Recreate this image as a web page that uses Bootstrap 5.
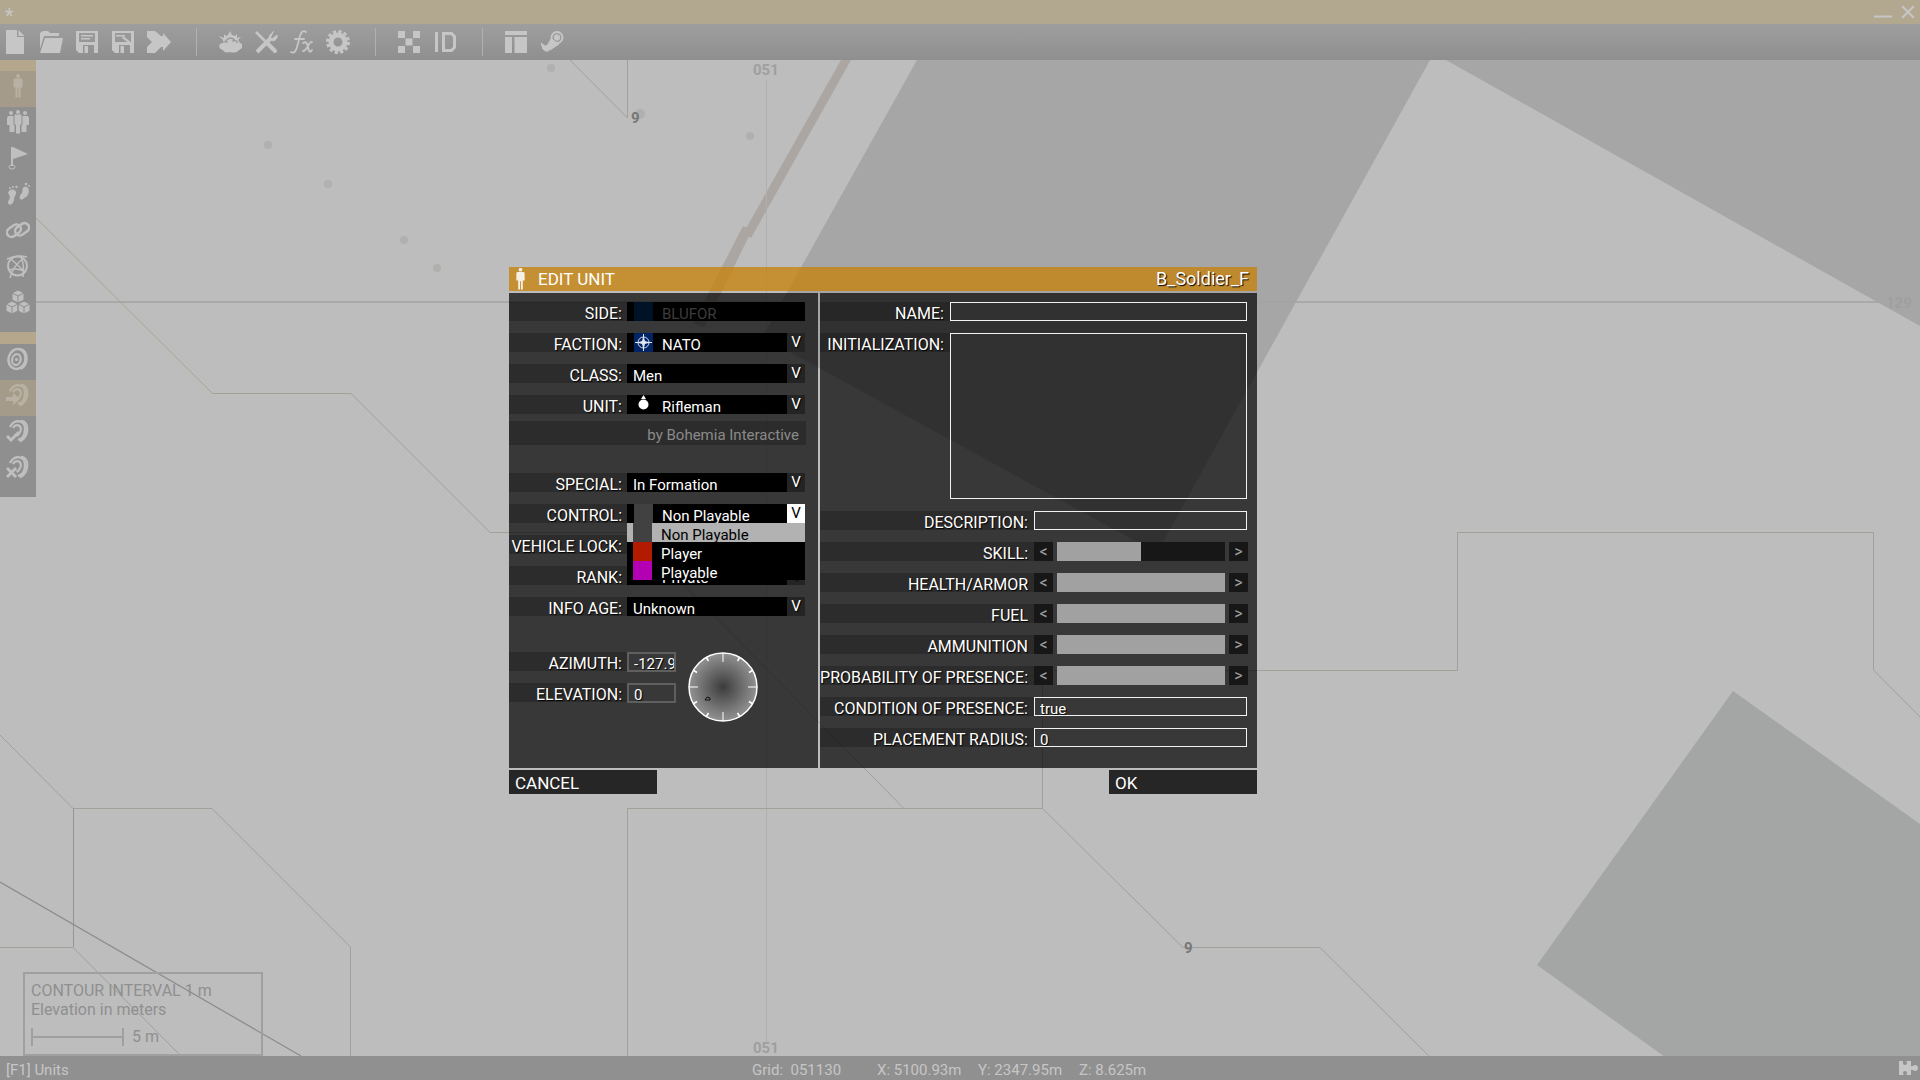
<!DOCTYPE html>
<html lang="en">
<head>
<meta charset="utf-8">
<meta name="viewport" content="width=device-width, initial-scale=1">
<title>Scenario editor - Edit Unit</title>
<link href="https://cdn.jsdelivr.net/npm/bootstrap@5.3.0/dist/css/bootstrap.min.css" rel="stylesheet">
<style>
  :root { --ink:#c6c6c6; }
  body { font-family:Roboto,"Liberation Sans",sans-serif; font-size:15px; line-height:18px; background:#bdbdbd; color:#fff; }
  button, input, select, textarea { font:inherit; color:inherit; border:0; border-radius:0; background:none; padding:0; margin:0; }
  .win-bar { height:24px; background:#b2a78f; color:var(--ink); padding:0 5px; }
  .win-mark { font-size:20px; line-height:32px; height:24px; }
  .tool-bar { height:36px; background:linear-gradient(#9e9e9e,#8f8f8f); padding-left:3px; gap:12px; color:var(--ink); }
  .tool-bar button { width:24px; height:24px; line-height:0; }
  .tool-sep { width:1px; height:28px; background:#b0b0b0; margin:0 9px 0 13px; }
  .map-area { overflow:hidden; }
  .map-svg { position:absolute; left:0; top:-60px; width:1920px; height:1080px; }
  .side-bar { position:absolute; left:0; top:-1px; width:36px; background:#8f8f8f; color:#bfbfbf; }
  .side-bar .side-head { height:12px; background:#b5a78c; }
  .side-bar .side-gap { height:9px; }
  .side-bar button { height:36px; padding:0 0 6px; line-height:0; }
  .side-bar .picked { background:#a59b8a; color:#b9b1a3; }
  .legend-box { position:absolute; left:23px; bottom:0; width:240px; height:84px; border:2px solid #a0a0a0; color:#8f8f8f; padding:7px 6px; font-size:16px; line-height:19px; }
  .scale-line { width:93px; height:18px; border:solid #a0a0a0; border-width:0 2px; background:linear-gradient(#a0a0a0,#a0a0a0) center/100% 2px no-repeat; }
  .status-bar { height:24px; background:#909090; color:var(--ink); padding:0 0 0 6px; font-size:15px; line-height:28px; }
  .status-read { position:absolute; left:752px; white-space:pre; }
  .status-read .grid-ref { width:125px; }
  .status-read .coord { width:101px; }

  .dlg { position:absolute; left:509px; top:207px; width:748px; max-width:100%; text-shadow:1px 1px 1px #000; }
  .dlg-head { height:24px; background:rgba(198,131,12,.78); padding:0 8px 0 5px; font-size:18px; line-height:24px; }
  .dlg-title { text-shadow:none; gap:11px; font-size:17px; }
  .dlg-body { gap:2px; margin:2px 0; }
  .pane { background:rgba(0,0,0,.7); padding-top:9px; height:475px; }
  .pane-left { width:309px; }
  .f-row { display:flex; height:19px; margin-bottom:12px; }
  .f-label { background:rgba(0,0,0,.2); flex:none; width:118px; height:19px; padding:3px 5px 0 0; display:flex; justify-content:flex-end; white-space:nowrap; text-transform:uppercase; font-size:16px; }
  .pane-right .f-label { width:214px; padding-right:6px; }
  .pane-right .f-label.short-label { width:130px; }
  .drop { position:relative; display:flex; width:178px; height:19px; background:#000; }
  .drop select { flex:1; min-width:0; appearance:none; padding:3px 0 0 6px; height:21px; outline:0; }
  .drop .swatch + select { padding-left:9px; }
  .swatch { width:19px; height:19px; margin-left:7px; flex:none; line-height:0; }
  .chev { width:18px; background:#232423; text-align:center; font-size:15px; line-height:19px; flex:none; }
  .chev.opened { background:#fff; color:#000; text-shadow:none; }
  .drop select:disabled { color:#3c3c3c; opacity:1; text-shadow:none; }
  .by-line { width:297px; height:24px; margin:-5px 0 28px; background:rgba(0,0,0,.2); color:#8a8a8a; text-align:right; padding-right:7px; line-height:28px; text-shadow:none; }
  .pick-list { position:absolute; left:0; top:19px; width:178px; background:#000; z-index:2; }
  .pick-list button { display:flex; width:100%; height:19px; text-align:left; gap:9px; line-height:24px; white-space:nowrap; }
  .pick-list .swatch { margin-left:6px; }
  .pick-list .chosen { background:#b2b2b2; color:#000; text-shadow:none; }
  .dial-row { margin-top:36px; gap:6px; }
  .num-in { width:49px; height:20px; border:2px solid rgba(255,255,255,.2); padding:3px 0 0 5px; text-shadow:inherit; }
  .text-in { flex:1; margin-right:10px; border:1px solid #f2f2f2; padding:4px 5px 0; text-shadow:inherit; resize:none; outline:0; }
  .init-box { height:166px; }
  .step { flex:none; width:19px; background:#171717; color:#a0a0a0; font-size:16px; line-height:20px; text-shadow:none; }
  .step-up { margin-right:9px; }
  .meter { flex:1; appearance:none; height:19px; margin:0 4px; min-width:0; background:linear-gradient(90deg,#a1a1a1 var(--v),#171717 var(--v)); }
  .meter::-webkit-slider-thumb { appearance:none; width:1px; height:19px; background:transparent; }
  .dlg-btn { width:148px; height:24px; background:#262626; text-align:left; padding-left:6px; font-size:17px; line-height:26px; text-shadow:none; }
</style>
</head>
<body>
<svg width="0" height="0" class="position-absolute" aria-hidden="true">
  <defs>
    <symbol id="man" viewBox="0 0 24 24"><circle cx="12" cy="2" r="2"/><path d="M8.500 4.500h7l1 1v8h-2v10h-2v-9h-1v9h-2v-10h-2v-8z"/></symbol>
    <symbol id="rings" viewBox="0 0 24 24"><g fill="none" stroke="currentColor"><ellipse cx="11" cy="12" rx="8.500" ry="10" stroke-width="2.500" transform="rotate(15 11 12)"/><path d="M14 2c8 2 9 14 1 20" stroke-width="2.500"/><ellipse cx="10.500" cy="12.500" rx="4.200" ry="5.500" stroke-width="2.200" transform="rotate(15 10 12)"/></g><circle cx="10.500" cy="12.500" r="1.600"/></symbol>
    <symbol id="arc" viewBox="0 0 24 24"><g fill="none" stroke="currentColor"><path d="M4 8C8-1 20 1 19 11c0 5-3 9-7 10" stroke-width="2.500"/><path d="M15 1.500c9 2 8 16-1 21" stroke-width="2.200"/><path d="M7 9c3-5 9-3 7.500 3-1 3-2 4-4 5" stroke-width="2.200"/></g></symbol>
  </defs>
</svg>
<div class="d-flex flex-column vh-100">
  <header class="win-bar d-flex justify-content-between">
    <span class="win-mark">*</span>
    <span class="d-flex align-items-center gap-2">
      <button aria-label="Minimize"><svg width="20" height="24"><path d="M1 16.500h18" stroke="#c6c6c6" stroke-width="2"/></svg></button>
      <button aria-label="Close"><svg width="14" height="24"><path d="M1 6l12 12M13 6L1 18" stroke="#c6c6c6" stroke-width="2"/></svg></button>
    </span>
  </header>
  <nav class="tool-bar d-flex align-items-center flex-shrink-0" aria-label="Tools">
    <button aria-label="New"><svg width="24" height="24" fill="currentColor"><path d="M3 0h11v7h7v17H3zM15.500 0l6 6h-6z"/></svg></button>
    <button aria-label="Open"><svg width="24" height="24" fill="currentColor"><path d="M1 3l3-2h5l2 2h9v3H5L1 19zM6 8h18l-3 15H1z"/></svg></button>
    <button aria-label="Save"><svg width="24" height="24" fill="currentColor"><path fill-rule="evenodd" d="M1 1h22v22h-4v-8H8v8H4l-3-3zM4 3v9h16V3zM6 5h12v1.500H6zm0 3h9v1.500H6zM9.500 16H13v7H9.500z"/></svg></button>
    <button aria-label="Save as"><svg width="24" height="24" fill="currentColor"><path fill-rule="evenodd" d="M1 1h22v22h-4v-8H8v8H4l-3-3zM4 3v9h16V3zM5 5h9v1.500H5zM9.500 16H13v7H9.500z"/><path d="M12 6l9 7-2 1-8-6z"/></svg></button>
    <button aria-label="Merge"><svg width="24" height="24" fill="currentColor"><path d="M0 1h8l6 5h2V3l8 9-8 9v-4h-2l-6 6H0v-6l5-5-5-5z"/></svg></button>
    <span class="tool-sep"></span>
    <button aria-label="Weather"><svg width="24" height="24" fill="currentColor"><path d="M5 10l-4-4 5 2V4l2 2 2-1 2-4 2 4 3 1 2-2v4l4-1-3 3 2 3c4 1 3 6-1 7-2 3-7 3-9 2-3 1-7 0-7-2-5-1-5-7 0-7z"/><path d="M7 12c3-5 8-5 10-1M5 12h5m4-1c3-1 6 0 5 2" stroke="#969696" fill="none" stroke-width="1.200"/></svg></button>
    <button aria-label="Attributes"><svg width="24" height="24" fill="none" stroke="currentColor"><path d="M3 22L17 8" stroke-width="4"/><path d="M20 1l-5 5 3 3 5-4c1 5-4 7-7 5" fill="currentColor"/><path d="M2 2l9 9" stroke-width="2.500"/><path d="M14 14l7 7" stroke-width="4" stroke-linecap="round"/></svg></button>
    <button aria-label="Functions"><svg width="24" height="24" fill="none" stroke="currentColor" stroke-width="1.800" stroke-linecap="round"><path d="M1 22c3 2 5-1 6-5L10 6c1-4 3-6 6-4M5 9h9"/><path d="M13 13c3-2 4 0 5 4 1 5 2 6 4 3M22 12c-3-1-5 9-9 9"/></svg></button>
    <button aria-label="Configuration"><svg width="24" height="24" fill="none" stroke="currentColor"><circle cx="12" cy="12" r="7" stroke-width="5"/><circle cx="12" cy="12" r="10.500" stroke-width="3" stroke-dasharray="3.200 2.300"/></svg></button>
    <span class="tool-sep"></span>
    <button aria-label="Textures"><svg width="24" height="24" fill="currentColor"><path d="M1 1h7v7H1zM16 1h7v7h-7zM8.500 8.500h7v7h-7zM1 16h7v7H1zM16 16h7v7h-7z"/></svg></button>
    <button aria-label="IDs"><svg width="24" height="24" fill="none" stroke="currentColor" stroke-width="3"><path d="M3.500 2v20M10.500 3.500h8l3 3v11l-3 3h-8z"/></svg></button>
    <span class="tool-sep"></span>
    <button aria-label="Layout"><svg width="24" height="24" fill="currentColor"><path d="M1 1h22v4H1zM1 7h7v16H1zM10.500 7H23v16H10.500z"/></svg></button>
    <button aria-label="Workshop"><svg width="24" height="24" fill="none" stroke="currentColor"><circle cx="17" cy="7.500" r="5.500" stroke-width="2"/><circle cx="17" cy="7.500" r="2.800" fill="currentColor"/><path d="M11 9l-4 7 3 4 9-6z" fill="currentColor"/><path d="M1 13l2 6c3 4 8 2 7-2-2-3-4-1-5-1z" fill="currentColor"/></svg></button>
  </nav>

  <main class="map-area position-relative flex-grow-1">
    <svg class="map-svg" viewBox="0 0 1920 1080" aria-hidden="true">
      <path fill="#a6a6a6" d="M917 60H1430L1157 553 762 337zM1446 60H1920V326z"/>
      <path fill="#a3a6a5" d="M1733 691L1920 824V1080H1697L1537 965z"/>
      <path fill="#aba6a2" d="M841 60h10L751 238l-7-6zM743 226l9 4-48 98-11-5z"/>
      <path fill="none" stroke="#b0b0b0" d="M766.500 80V1044"/>
      <path fill="none" stroke="#a3a3a3" stroke-width="1.500" d="M36 302H1886"/>
      <g fill="none" stroke="#a39f99">
        <path stroke="#a6a58c" d="M36 218L212 393"/>
        <path d="M570 60L627.500 118V60M212 393.500H351L490 532.500H632L904 808.500H1042.500L1183 947.500H1320L1429 1056M1042.500 808V670.500H1457.500V532.500H1873.500V670L1920 717M627.500 1056V808.500H904M0 735L73 808.500H212L350.500 947V1056M0 947.500H73L181 1056"/>
        <path stroke="#949494" d="M73.500 808V947"/>
      </g>
      <path stroke="#8a8a8a" stroke-width="1.200" d="M0 882L301 1056"/>
      <g fill="#b0b0ae"><circle cx="268" cy="145" r="4"/><circle cx="328" cy="184" r="4"/><circle cx="404" cy="240" r="4"/><circle cx="437" cy="268" r="4"/><circle cx="551" cy="68" r="4"/><circle cx="640" cy="114" r="5"/><circle cx="750" cy="136" r="4"/></g>
      <g font-family="Roboto" font-weight="700" font-size="15" fill="#9f9f9f">
        <text x="753" y="75">051</text><text x="753" y="1053">051</text><text x="1886" y="308">129</text>
        <text x="631" y="123" fill="#777">9</text><text x="1184" y="953" fill="#777">9</text>
      </g>
    </svg>

    <div class="legend-box">
      <div>CONTOUR INTERVAL 1 m</div>
      <div>Elevation in meters</div>
      <div class="d-flex gap-2 mt-2 align-items-center"><span class="scale-line"></span><span>5 m</span></div>
    </div>

    <aside class="side-bar d-flex flex-column">
      <div class="side-head"></div>
      <button class="picked" aria-label="Units"><svg width="24" height="24" fill="currentColor"><use href="#man"/></svg></button>
      <button aria-label="Groups"><svg width="24" height="24" fill="currentColor"><circle cx="12" cy="2" r="2"/><circle cx="5" cy="3" r="2"/><circle cx="19" cy="3" r="2"/><path d="M8.500 4.500h7v10h-1.500v9h-4v-9H8.500zM2 6h5.500v9h1v7H3.500v-7H1V8zM22 6h-5.500v9h-1v7h5v-7H23V8z"/></svg></button>
      <button aria-label="Triggers"><svg width="24" height="24"><path d="M7 1l15 7-15 5z" fill="currentColor"/><path d="M6 1v19" stroke="currentColor" stroke-width="2"/><ellipse cx="6" cy="21" rx="3" ry="2" fill="none" stroke="currentColor"/></svg></button>
      <button aria-label="Waypoints"><svg width="24" height="24" fill="currentColor"><path d="M3 9c3-3 8-1 7 3-1 2-2 3-2 6-1 5-5 6-6 3 0-3 2-4 2-6C3 12 1 11 3 9zM22 6c2 3 0 8-2 9-2 0-3 4-6 2-1-1 0-4 1-5 2-1 1-4 2-6s4-1 5 0z"/><circle cx="4" cy="6" r="1"/><circle cx="7" cy="5" r="1"/><circle cx="10.500" cy="5" r="1.200"/><circle cx="20" cy="2" r="1.300"/><circle cx="23" cy="4" r="1"/></svg></button>
      <button aria-label="Synchronize"><svg width="24" height="24" fill="none" stroke="currentColor" stroke-width="2.500"><rect x="0" y="8" width="15" height="9" rx="4.500" transform="rotate(-35 8 12)"/><rect x="9" y="7" width="15" height="9" rx="4.500" transform="rotate(-35 16 12)"/></svg></button>
      <button aria-label="Markers"><svg width="24" height="24" fill="none" stroke="currentColor" stroke-width="1.500"><circle cx="11.500" cy="12" r="9.500" stroke-width="2"/><path d="M1 5c6-3 13-4 20-2M5 5l14 13M18 4C11 9 6 15 4 24M3 16c6-2 12-1 17 2M15 3c3 6 3 12 2 20"/></svg></button>
      <button aria-label="Modules"><svg width="24" height="24" fill="currentColor" stroke="#8f8f8f"><path d="M12 0l6 3v7l-6 3-6-3V3zM6 11l6 3v7l-6 3-6-3v-7zM18 11l6 3v7l-6 3-6-3v-7z"/><path d="M6 3l6 3 6-3M12 6v7M0 14l6 3 6-3 6 3 6-3M6 17v7M18 17v7" fill="none"/></svg></button>
      <div class="side-gap"></div>
      <div class="side-head"></div>
      <button aria-label="Spawn"><svg width="24" height="24" fill="currentColor"><use href="#rings"/></svg></button>
      <button class="picked" aria-label="Move"><svg width="24" height="24" fill="currentColor"><use href="#arc"/><path d="M0 14h7v-4l7 6-7 6v-4H0z"/></svg></button>
      <button aria-label="Accept"><svg width="24" height="24" fill="none" stroke="currentColor" stroke-width="3"><use href="#arc"/><path d="M1 17l4 4 8-8"/></svg></button>
      <button aria-label="Remove"><svg width="24" height="24" fill="none" stroke="currentColor" stroke-width="3"><use href="#arc"/><path d="M1 13l9 9M10 13l-9 9"/></svg></button>
      <div class="side-gap"></div>
    </aside>

    <form class="dlg" onsubmit="return false">
      <div class="dlg-head d-flex justify-content-between">
        <span class="dlg-title d-flex"><svg width="13" height="24" viewBox="6 -1 12 26" fill="#f5f0e4"><use href="#man" width="24" height="24"/></svg>EDIT UNIT</span>
        <span>B_Soldier_F</span>
      </div>
      <div class="dlg-body d-flex">
        <section class="pane pane-left">
          <div class="f-row"><label class="f-label" for="side">Side:</label><div class="drop"><span class="swatch" style="background:#001226"></span><select id="side" disabled><option>BLUFOR</option></select></div></div>
          <div class="f-row"><label class="f-label" for="faction">Faction:</label><div class="drop"><span class="swatch" style="background:#012465"><svg width="19" height="19" fill="none" stroke="#dfe6f2"><circle cx="9.500" cy="9.500" r="5.500"/><path d="M9.500 1v17M1 9.500h17"/><path fill="#dfe6f2" stroke="none" d="M9.500 3l1.500 5 5 1.500-5 1.500-1.500 5L8 11 3 9.500 8 8z"/></svg></span><select id="faction"><option>NATO</option></select><span class="chev">V</span></div></div>
          <div class="f-row"><label class="f-label" for="cls">Class:</label><div class="drop"><select id="cls"><option>Men</option></select><span class="chev">V</span></div></div>
          <div class="f-row"><label class="f-label" for="unit">Unit:</label><div class="drop"><span class="swatch"><svg width="19" height="19" fill="#fff"><circle cx="9.500" cy="9.500" r="5"/><path d="M9.500 0l2.500 4H7z"/></svg></span><select id="unit"><option>Rifleman</option></select><span class="chev">V</span></div></div>
          <div class="by-line">by Bohemia Interactive</div>
          <div class="f-row"><label class="f-label" for="special">Special:</label><div class="drop"><select id="special"><option>In Formation</option></select><span class="chev">V</span></div></div>
          <div class="f-row"><label class="f-label" for="control">Control:</label><div class="drop"><span class="swatch" style="background:#414141"></span><select id="control"><option>Non Playable</option></select><span class="chev opened">V</span>
            <div class="pick-list" role="listbox">
              <button type="button" class="chosen"><span class="swatch" style="background:#414141"></span>Non Playable</button>
              <button type="button"><span class="swatch" style="background:#b31b00"></span>Player</button>
              <button type="button"><span class="swatch" style="background:#b300b3"></span>Playable</button>
            </div></div></div>
          <div class="f-row"><label class="f-label" for="lock">Vehicle lock:</label><div class="drop"><select id="lock"><option>Default</option></select><span class="chev">V</span></div></div>
          <div class="f-row"><label class="f-label" for="rank">Rank:</label><div class="drop"><span class="swatch"></span><select id="rank"><option>Private</option></select><span class="chev">V</span></div></div>
          <div class="f-row"><label class="f-label" for="info">Info age:</label><div class="drop"><select id="info"><option>Unknown</option></select><span class="chev">V</span></div></div>
          <div class="d-flex dial-row">
            <div>
              <div class="f-row"><label class="f-label" for="azi">Azimuth:</label><input class="num-in" id="azi" value="-127.917"></div>
              <div class="f-row"><label class="f-label" for="ele">Elevation:</label><input class="num-in" id="ele" value="0"></div>
            </div>
            <svg width="80" height="72" viewBox="-41 -35 80 72" role="img" aria-label="Azimuth dial">
              <defs><radialGradient id="dg"><stop offset="0" stop-color="#3c3c3c"/><stop offset="1" stop-color="#929292"/></radialGradient></defs>
              <circle r="34" fill="url(#dg)" stroke="#fff" stroke-width="1.500"/>
              <g stroke="#fff"><path d="M0-34v9M0 34v-9M-34 0h9M34 0h-9"/><path stroke-width="1.500" d="M17-30l-2.500 4M30-17l-4 2.500M30 17l-4-2.500M17 30l-2.500-4M-17 30l2.500-4M-30 17l4-2.500M-30-17l4 2.500M-17-30l2.500 4"/></g>
              <path d="M-18 13l2-3 3 1v2z" fill="none" stroke="#111"/>
            </svg>
          </div>
        </section>
        <section class="pane pane-right flex-grow-1">
          <div class="f-row"><label class="f-label short-label" for="nm">Name:</label><input class="text-in" id="nm"></div>
          <div class="f-row h-auto"><label class="f-label short-label" for="init">Initialization:</label><textarea class="text-in init-box" id="init"></textarea></div>
          <div class="f-row"><label class="f-label" for="desc">Description:</label><input class="text-in" id="desc"></div>
          <div class="f-row"><label class="f-label" for="skill">Skill:</label><button type="button" class="step">&lt;</button><input type="range" class="meter" id="skill" value="50" style="--v:50%"><button type="button" class="step step-up">&gt;</button></div>
          <div class="f-row"><label class="f-label" for="hp">Health/Armor</label><button type="button" class="step">&lt;</button><input type="range" class="meter" id="hp" value="100" style="--v:100%"><button type="button" class="step step-up">&gt;</button></div>
          <div class="f-row"><label class="f-label" for="fuel">Fuel</label><button type="button" class="step">&lt;</button><input type="range" class="meter" id="fuel" value="100" style="--v:100%"><button type="button" class="step step-up">&gt;</button></div>
          <div class="f-row"><label class="f-label" for="ammo">Ammunition</label><button type="button" class="step">&lt;</button><input type="range" class="meter" id="ammo" value="100" style="--v:100%"><button type="button" class="step step-up">&gt;</button></div>
          <div class="f-row"><label class="f-label" for="prob">Probability of presence:</label><button type="button" class="step">&lt;</button><input type="range" class="meter" id="prob" value="100" style="--v:100%"><button type="button" class="step step-up">&gt;</button></div>
          <div class="f-row"><label class="f-label" for="cond">Condition of presence:</label><input class="text-in" id="cond" value="true"></div>
          <div class="f-row"><label class="f-label" for="rad">Placement radius:</label><input class="text-in" id="rad" value="0"></div>
        </section>
      </div>
      <div class="d-flex justify-content-between">
        <button type="button" class="dlg-btn">CANCEL</button>
        <button type="submit" class="dlg-btn">OK</button>
      </div>
    </form>
  </main>

  <footer class="status-bar position-relative d-flex justify-content-between flex-shrink-0">
    <span>[F1] Units</span>
    <span class="status-read d-flex"><span class="grid-ref">Grid:  051130</span><span class="coord">X: 5100.93m</span><span class="coord">Y: 2347.95m</span><span>Z: 8.625m</span></span>
    <svg width="22" height="24" fill="currentColor"><path d="M1 5h4c-1 3 3 3 2 0h6v5c2 1 2-1 4-1 4 0 4 6 0 6-2 0-2-2-4-1v5H8c1-4-3-4-2 0H1z"/><circle cx="7" cy="7" r="2" fill="#909090"/><circle cx="7" cy="17" r="2" fill="#909090"/></svg>
  </footer>
</div>
<script src="https://cdn.jsdelivr.net/npm/bootstrap@5.3.0/dist/js/bootstrap.bundle.min.js"></script>
</body>
</html>
